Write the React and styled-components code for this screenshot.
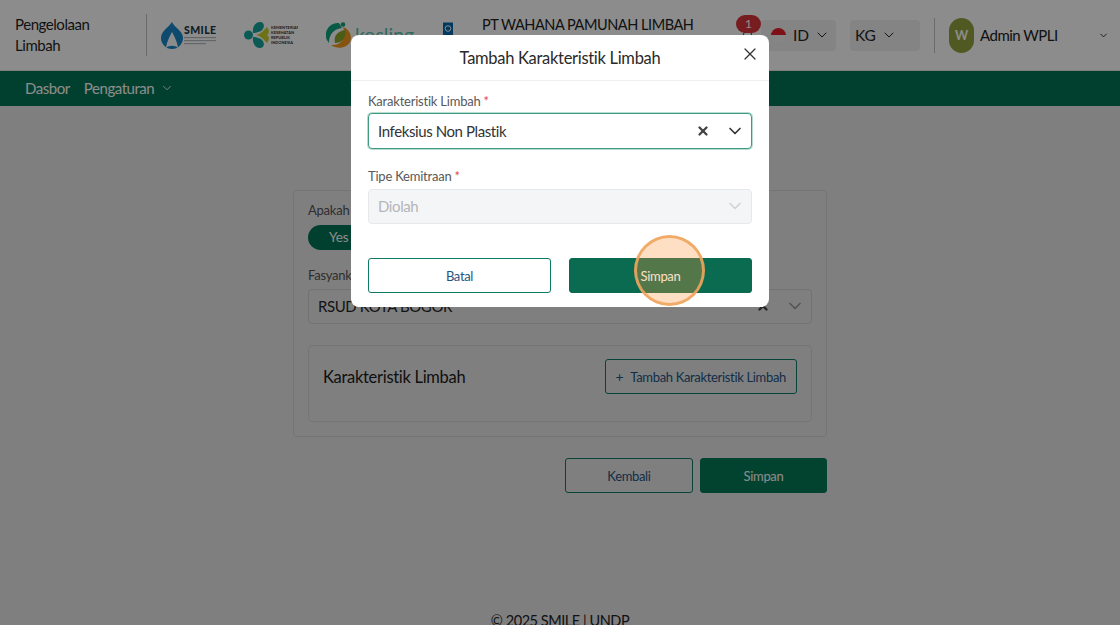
import React from 'react';
import styled, { createGlobalStyle } from 'styled-components';
import { Bell as BellIcon, ChevronDown, X } from 'lucide-react';

const Global = createGlobalStyle`
  html, body { margin: 0; padding: 0; height: 625px; overflow: hidden; background: #e8e8e8; }
  * { box-sizing: border-box; }
  body { font-family: Lato, "Open Sans", sans-serif; color: #262626; }
`;

const Page = styled.div`position: relative; width: 1120px; height: 625px; overflow: hidden; background: #e8e8e8;`;

const Header = styled.header`
  height: 71px; display: flex; align-items: center; background: #fff; padding-left: 15px;
  border-bottom: 1px solid #e4e4e4; white-space: nowrap;
`;
const AppTitle = styled.div`width: 131px; height: 42px; font-size: 15px; letter-spacing: -.45px; line-height: 20.5px; color: #1f1f1f;`;
const VDivider = styled.div`width: 1px; height: 42px; background: #c4c4c4; flex: none;`;
const Logos = styled.div`display: flex; align-items: center; height: 40px;`;
const Logo = styled.svg`display: block; flex: none; margin-left: ${p => p.$gap}px;`;
const Company = styled.div`
  margin-left: 27px; width: 245px; height: 42px; overflow: hidden;
  font-size: 14.5px; letter-spacing: -.45px; line-height: 21px; color: #222; white-space: normal;
`;
const Bell = styled.div`position: relative; width: 25px; height: 30px; margin-left: 9px; flex: none; color: #444;`;
const BellGlyph = styled(BellIcon)`position: absolute; left: 3px; top: 10px;`;
const Badge = styled.span`
  position: absolute; left: 0; top: -5px; width: 25px; height: 18px; border-radius: 9px; background: #d9363a;
  color: #fff; font-size: 12px; line-height: 18px; text-align: center;
`;
const Dropdown = styled.div`
  display: flex; align-items: center; width: ${p => p.$w}px; height: 31px; margin-left: ${p => p.$gap}px;
  padding-left: ${p => p.$pad}px; border-radius: 4px; background: #f0f0f0; font-size: 15.5px; letter-spacing: -.2px; color: #262626; flex: none;
`;
const Flag = styled.span`
  width: 15px; height: 15px; border-radius: 50%; margin-right: 7px; flex: none;
  background: linear-gradient(#e3202a 50%, #f4f4f4 50%);
`;
const Chev = styled(ChevronDown)`margin-left: 5px; flex: none;`;
const Divider2 = styled(VDivider)`height: 35px; margin-left: 14px;`;
const Avatar = styled.div`
  width: 25px; height: 35px; border-radius: 12.5px; background: #94a33e; color: #fff; font-size: 12.5px; font-weight: 700;
  display: flex; align-items: center; justify-content: center; margin-left: 14px; flex: none;
`;
const UserName = styled.div`margin-left: 6px; width: 118px; font-size: 15px; letter-spacing: -.5px; color: #222; flex: none;`;

const Nav = styled.nav`
  height: 35px; background: #027554; display: flex; align-items: center; padding: 0 0 1px 25px;
  font-size: 15px; letter-spacing: -.45px; color: #fff;
`;
const NavItem = styled.span`margin-right: ${p => p.$mr}px;`;

const Main = styled.main`width: 534px; margin: 84px 0 0 293px;`;
const Card = styled.section`
  height: 247px; border: 1px solid #d6d6d6; border-radius: 4px; padding: 11px 14px;
`;
const FieldLabel = styled.div`font-size: 13px; letter-spacing: -.22px; line-height: 16px; color: #555;`;
const Toggle = styled.div`
  width: 120px; height: 25px; margin-top: 7px; border-radius: 13px; background: #027554; color: #fff;
  font-size: 13.5px; letter-spacing: -.2px; line-height: 25px; padding-left: 21px;
`;
const PageLabel = styled(FieldLabel)`margin-top: 17px;`;
const PageSelect = styled.div`
  display: flex; align-items: center; height: 35px; margin-top: 6px; padding: 0 6px 1px 9px; border: 1px solid #d0d0d0;
  border-radius: 4px; font-size: 15px; letter-spacing: -.4px; color: #262626;
`;
const Grow = styled.span`flex: 1;`;
const InnerCard = styled.div`
  display: flex; justify-content: space-between; height: 77px; margin-top: 21px; padding: 13px 14px 0;
  border: 1px solid #d6d6d6; border-radius: 4px;
`;
const InnerTitle = styled.h3`margin: 1px 0 0; font-size: 16.5px; letter-spacing: -.3px; font-weight: 400; line-height: 35px; color: #1c1c1c;`;
const Button = styled.button`
  display: flex; align-items: center; justify-content: center; height: 35px; width: ${p => p.$w ? `${p.$w}px` : 'auto'};
  padding: ${p => p.$w ? '0' : '0 10px'}; border-radius: 3px; font: 400 13px Lato, sans-serif; letter-spacing: -.33px;
  border: 1px solid ${p => p.$solid ? p.$fill : '#0f7a64'}; background: ${p => p.$solid ? p.$fill : 'transparent'};
  color: ${p => p.$solid ? '#fff' : '#1f5482'}; flex: none;
`;
const BatalButton = styled(Button)`background: #fff;`;
const Plus = styled.span`margin-right: 7px; font-size: 14px; line-height: 1;`;
const PageActions = styled.div`display: flex; justify-content: flex-end; gap: 7px; margin-top: 21px;`;
const Footer = styled.footer`
  position: absolute; left: 0; right: 0; top: 612px; text-align: center; font-size: 14.5px; letter-spacing: -.45px; color: #222; line-height: 18px;
`;

const Overlay = styled.div`position: absolute; inset: 0; background: rgba(0,0,0,.45);`;
const Modal = styled.div`
  position: absolute; left: 351px; top: 35px; width: 418px; height: 272px; background: #fff; border-radius: 8px; overflow: hidden;
`;
const ModalHead = styled.div`
  position: relative; height: 46px; border-bottom: 1px solid #f0f0f0; display: flex; align-items: center; justify-content: center;
  font-size: 16.5px; letter-spacing: -.3px; color: #2a2a2a;
`;
const Close = styled(X)`position: absolute; right: 9px; top: 9px; color: #333;`;
const ModalBody = styled.div`padding: 12px 17px 0;`;
const Label = styled.div`font-size: 13px; letter-spacing: -.22px; line-height: 17px; color: #595959;`;
const Req = styled.span`color: #e5484d;`;
const Select = styled.div`
  display: flex; align-items: center; height: ${p => p.$h}px; margin-top: ${p => p.$mt}px; padding: 0 6px 1px 9px;
  border-radius: 4px; font-size: 15px; letter-spacing: -.4px;
  border: 1px solid ${p => p.$disabled ? '#e6e8ea' : '#3f9a80'};
  background: ${p => p.$disabled ? '#f4f5f7' : '#fff'};
  color: ${p => p.$disabled ? '#b4b6b8' : '#333'};
  box-shadow: ${p => p.$disabled ? 'none' : '0 0 0 1px rgba(15,140,106,.3)'};
`;
const Clear = styled(X)`color: #444; margin-right: 15px; flex: none;`;
const Label2 = styled(Label)`margin-top: 19px;`;
const ModalActions = styled.div`display: flex; justify-content: space-between; margin-top: 34px;`;
const Spot = styled.div`
  position: absolute; left: 634px; top: 235px; width: 71px; height: 71px; border-radius: 50%;
  background: rgba(255,150,60,.3); border: 3px solid rgba(240,165,95,.9);
`;

function SmileLogo() {
  return (
    <Logo $gap={14} width="56" height="28" viewBox="0 0 56 28">
      <path d="M11 1 C13 6 22 10 22 17 A10.5 10.5 0 0 1 0 17 C0 10 8 6 11 1Z" fill="#1a88c9" />
      <path d="M5 27 C6 20 8 17 11 11 C14 17 16 20 17 27 C14 24 8 24 5 27Z" fill="#fff" />
      <text x="23" y="13" fontFamily="Lato, sans-serif" fontWeight="900" fontSize="10.5" letterSpacing=".4" fill="#1d3a4a">SMILE</text>
      <rect x="23" y="16" width="32" height="1.2" fill="#b5bcc0" />
      <rect x="23" y="19" width="32" height="1.2" fill="#b5bcc0" />
      <rect x="23" y="22" width="22" height="1.2" fill="#b5bcc0" />
    </Logo>
  );
}
function KemenkesLogo() {
  return (
    <Logo $gap={27} width="54" height="26" viewBox="0 0 54 26">
      <circle cx="4.5" cy="13" r="4.5" fill="#16a49b" />
      <path d="M9 11 C8 4 12 0 16 0 C21 0 21 6 17 9 C14 10 12 11 9 11Z M9 15 C8 22 12 26 16 26 C21 26 21 20 17 17 C14 16 12 15 9 15Z" fill="#16a49b" />
      <path d="M12 13 C17 12 19 9 23 5 C26 9 25 12 23 13 C25 14 26 17 23 21 C19 17 17 14 12 13Z" fill="#c9cf2a" />
      <g fontFamily="Lato, sans-serif" fontWeight="700" fontSize="4" fill="#333">
        <text x="27" y="7">KEMENTERIAN</text>
        <text x="27" y="12">KESEHATAN</text>
        <text x="27" y="17">REPUBLIK</text>
        <text x="27" y="22">INDONESIA</text>
      </g>
    </Logo>
  );
}
function KoslingLogo() {
  return (
    <Logo $gap={28} width="89" height="26" viewBox="0 0 89 26">
      <path d="M13 1 A12 12 0 0 0 3 21 C3 12 8 7 16 6Z" fill="#12a57f" />
      <path d="M17 5 C26 8 28 20 20 24 C15 27 9 26 5 23 C15 24 21 16 17 5Z" fill="#f39a1f" />
      <path d="M9 21 C7 14 12 9 19 8 C21 15 16 21 9 21Z" fill="#8aa82b" />
      <circle cx="17" cy="2.5" r="2.3" fill="#12a57f" />
      <text x="29" y="20" fontFamily="Lato, sans-serif" fontWeight="400" fontSize="19.5" fill="#5cc4b0">kosling</text>
    </Logo>
  );
}
function UndpLogo() {
  return (
    <Logo $gap={26} width="14" height="28" viewBox="0 0 14 28">
      <rect x="2" y="1.5" width="10" height="13" fill="#0468b1" />
      <circle cx="7" cy="7.5" r="2.8" fill="none" stroke="#fff" strokeWidth="1" />
      <text x="2" y="22" fontFamily="Lato, sans-serif" fontWeight="700" fontSize="5" fill="#0468b1">UN</text>
    </Logo>
  );
}

export default function App() {
  return (
    <Page>
      <Global />
      <Header>
        <AppTitle>Pengelolaan<br />Limbah</AppTitle>
        <VDivider />
        <Logos>
          <SmileLogo />
          <KemenkesLogo />
          <KoslingLogo />
          <UndpLogo />
        </Logos>
        <Company>PT WAHANA PAMUNAH LIMBAH INDUSTRI</Company>
        <Bell><BellGlyph size={17} strokeWidth={1.5} /><Badge>1</Badge></Bell>
        <Dropdown $w={75} $gap={0} $pad={10}>
          <Flag />ID<Chev size={16} strokeWidth={1.5} />
        </Dropdown>
        <Dropdown $w={70} $gap={14} $pad={5}>
          KG<Chev size={16} strokeWidth={1.5} />
        </Dropdown>
        <Divider2 />
        <Avatar>W</Avatar>
        <UserName>Admin WPLI</UserName>
        <ChevronDown size={11} />
      </Header>
      <Nav>
        <NavItem $mr={14}>Dasbor</NavItem>
        <NavItem $mr={6}>Pengaturan</NavItem>
        <ChevronDown size={14} strokeWidth={1.5} />
      </Nav>
      <Main>
        <Card>
          <FieldLabel>Apakah</FieldLabel>
          <Toggle>Yes</Toggle>
          <PageLabel>Fasyankes</PageLabel>
          <PageSelect>
            RSUD KOTA BOGOR<Grow />
            <Clear size={14} strokeWidth={4} />
            <ChevronDown size={20} strokeWidth={2} color="#999" />
          </PageSelect>
          <InnerCard>
            <InnerTitle>Karakteristik Limbah</InnerTitle>
            <Button><Plus>+</Plus>Tambah Karakteristik Limbah</Button>
          </InnerCard>
        </Card>
        <PageActions>
          <Button $w={128}>Kembali</Button>
          <Button $w={127} $solid $fill="#047a58">Simpan</Button>
        </PageActions>
      </Main>
      <Footer>© 2025 SMILE | UNDP</Footer>
      <Overlay />
      <Modal>
        <ModalHead>
          Tambah Karakteristik Limbah
          <Close size={20} strokeWidth={1.5} />
        </ModalHead>
        <ModalBody>
          <Label>Karakteristik Limbah <Req>*</Req></Label>
          <Select $h={36} $mt={3}>
            Infeksius Non Plastik<Grow />
            <Clear size={14} strokeWidth={4} />
            <ChevronDown size={20} strokeWidth={2} />
          </Select>
          <Label2>Tipe Kemitraan <Req>*</Req></Label2>
          <Select $h={35} $mt={4} $disabled>
            Diolah<Grow />
            <ChevronDown size={20} strokeWidth={2} color="#d0d2d4" />
          </Select>
          <ModalActions>
            <BatalButton $w={183}>Batal</BatalButton>
            <Button $w={183} $solid $fill="#0a6b50">Simpan</Button>
          </ModalActions>
        </ModalBody>
      </Modal>
      <Spot />
    </Page>
  );
}
